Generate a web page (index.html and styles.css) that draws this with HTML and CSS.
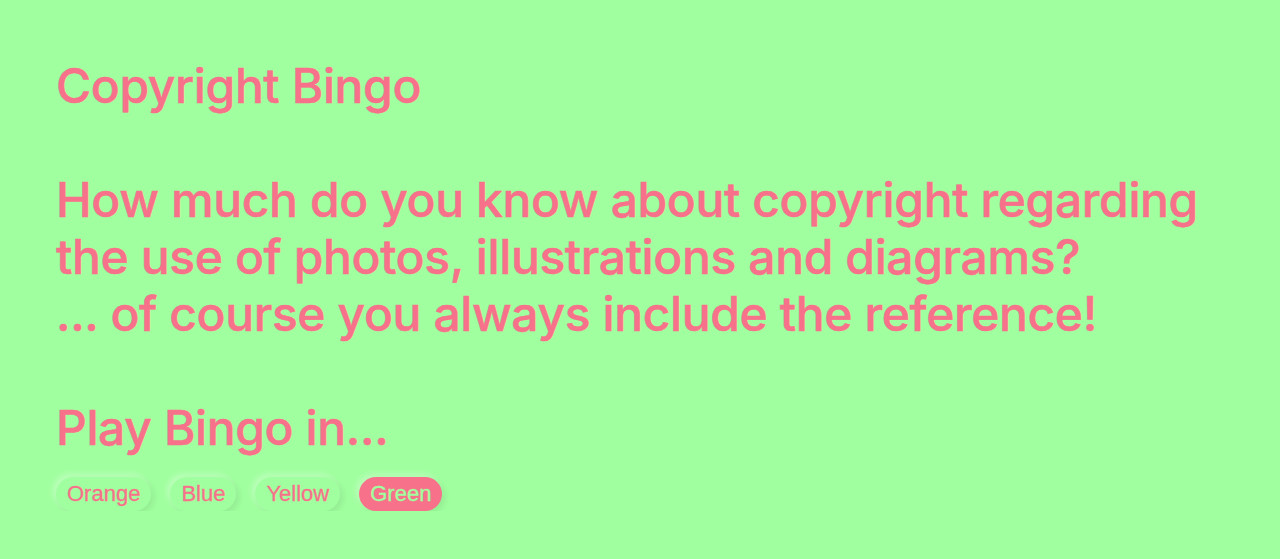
FILE: index.html
```html
<!DOCTYPE html>
<html lang="en">
<head>
<meta charset="utf-8">
<title>Copyright Bingo</title>
<link rel="stylesheet" href="styles.css">
</head>
<body>
<main class="page">
  <h1 class="title">Copyright Bingo</h1>
  <p class="intro">How much do you know about copyright regarding<br>the use of photos, illustrations and diagrams?<br>... of course you always include the reference!</p>
  <h2 class="title play">Play Bingo in...</h2>
  <nav class="chips">
    <button class="chip">Orange</button>
    <button class="chip">Blue</button>
    <button class="chip">Yellow</button>
    <button class="chip active">Green</button>
  </nav>
</main>
</body>
</html>
```
FILE: styles.css
```css
html, body {
  margin: 0;
  padding: 0;
  background: #a0ff9f;
}
body {
  font-family: Inter, "Liberation Sans", sans-serif;
  color: #f7718b;
}
.page {
  padding: 57px 56px 0 56px;
}
.title, .intro {
  font-size: 48px;
  line-height: 57px;
  font-weight: 500;
  letter-spacing: -0.008em;
  -webkit-text-stroke: 0.5px currentColor;
  margin: 0;
}
.intro {
  margin-top: 57px;
}
.play {
  margin-top: 57px;
}
.chips {
  display: flex;
  gap: 19px;
  margin-top: 21px;
}
.chip {
  font-family: "Liberation Sans", Arial, sans-serif;
  font-size: 22px;
  font-weight: 400;
  color: #f7718b;
  background: #a0ff9f;
  border: none;
  border-radius: 999px;
  padding: 0 11px;
  height: 34px;
  line-height: 34px;
  box-shadow: -3px -3px 6px rgba(255,255,255,0.3), 3px 3px 7px rgba(0,0,0,0.08);
  -webkit-text-stroke: 0.3px currentColor;
}
.chip.active {
  background: #f7718b;
  color: #a0ff9f;
}
```
